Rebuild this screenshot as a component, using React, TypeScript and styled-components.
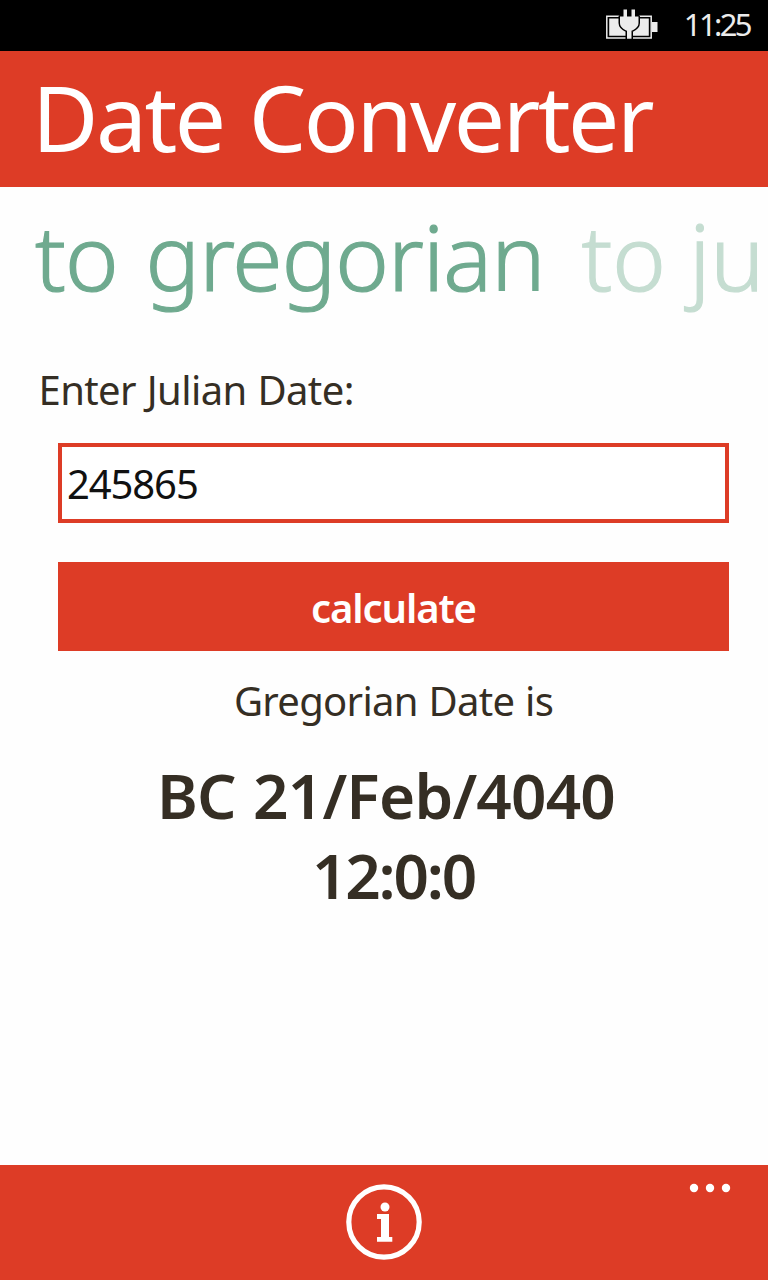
import React from 'react';
import styled, { createGlobalStyle } from 'styled-components';

const accent = '#dd3c26';
const ink = '#352e24';

const GlobalStyle = createGlobalStyle`
  *, *::before, *::after { box-sizing: border-box; }
  body {
    margin: 0;
    background: #fff;
    font-family: 'Noto Sans', 'Open Sans', sans-serif;
  }
`;

const Screen = styled.div`
  width: 768px;
  height: 1280px;
  display: flex;
  flex-direction: column;
  overflow: hidden;
  background: #fefefe;
  color: ${ink};
`;

const StatusBar = styled.div`
  height: 51px;
  display: flex;
  justify-content: flex-end;
  background: #000;
  color: #ececec;
  padding-right: 18px;
`;

const BatteryIcon = styled.svg`
  width: 54px;
  height: 32px;
  margin: 8px 25.5px 0 0;
`;

const Clock = styled.time`
  font-size: 31px;
  line-height: 48px;
  letter-spacing: -2.6px;
`;

const Header = styled.header`
  height: 136px;
  padding: 16px 0 0 32px;
  background: ${accent};
`;

const Title = styled.h1`
  margin: 0;
  color: #fff;
  font-size: 91px;
  font-weight: 400;
  line-height: 100px;
  letter-spacing: -2.5px;
  word-spacing: 4px;
  white-space: nowrap;
`;

const Tabs = styled.nav`
  height: 178px;
  display: flex;
  gap: 37px;
  padding: 19px 0 0 35px;
  overflow: hidden;
`;

const Tab = styled.span<{ $active?: boolean }>`
  flex: none;
  color: ${(p) => (p.$active ? '#6faa8f' : '#c5ddd1')};
  -webkit-text-stroke: 1.2px currentColor;
  font-size: 91px;
  font-weight: 300;
  line-height: 100px;
  letter-spacing: ${(p) => (p.$active ? '-0.9px' : '-0.2px')};
  word-spacing: ${(p) => (p.$active ? '5px' : '0')};
`;

const Content = styled.main`
  flex: 1;
  display: flex;
  flex-direction: column;
  padding: 0 39px 0 58px;
`;

const Label = styled.label`
  margin-left: -19.5px;
  font-size: 40px;
  line-height: 50px;
  letter-spacing: -0.6px;
  word-spacing: 1px;
`;

const DateInput = styled.input`
  height: 80px;
  margin-top: 28px;
  padding: 1px 5px 0;
  border: 4.5px solid ${accent};
  border-radius: 0;
  outline: none;
  background: #fff;
  color: #111;
  font: 400 40px 'Noto Sans', 'Open Sans', sans-serif;
  letter-spacing: -1.1px;
`;

const CalculateButton = styled.button`
  height: 89px;
  margin-top: 39px;
  padding: 2px 0 0;
  border: 0;
  background: ${accent};
  color: #fff;
  font: 600 40px/87px 'Noto Sans', 'Open Sans', sans-serif;
  letter-spacing: -1.1px;
`;

const Caption = styled.p`
  margin: 25px 0 0;
  text-align: center;
  font-size: 40px;
  line-height: 50px;
  letter-spacing: -0.7px;
  word-spacing: 1px;
`;

const Result = styled.output`
  display: flex;
  flex-direction: column;
  margin-top: 29px;
  text-align: center;
  font-size: 62px;
  font-weight: 600;
  line-height: 80px;
`;

const ResultDate = styled.span`
  padding-right: 15px;
  letter-spacing: -0.8px;
  word-spacing: 2px;
`;

const ResultTime = styled.span`
  letter-spacing: -2.2px;
`;

const AppBar = styled.footer`
  height: 115px;
  display: grid;
  grid-template-columns: 1fr auto 1fr;
  padding-top: 18px;
  background: ${accent};
`;

const InfoIcon = styled.svg`
  grid-column: 2;
  width: 76px;
  height: 76px;
  margin-top: 1px;
`;

const MoreIcon = styled.svg`
  justify-self: end;
  width: 42px;
  height: 10px;
  margin-right: 37.5px;
`;

export default function App() {
  return (
    <>
      <GlobalStyle />
      <Screen>
        <StatusBar>
          <BatteryIcon viewBox="0 0 54 32" fill="#ececec">
            <path fill="none" stroke="#ececec" strokeWidth="1.5" d="M2.800 8.200H47.200V30H2.800z" />
            <path d="M5.200 10.500h39.600v17.300H5.200zM48 14h5.500v10H48z" />
            <path
              stroke="#000"
              strokeWidth="3"
              strokeLinejoin="round"
              paintOrder="stroke"
              d="M19.500 1.500H23V8.500h4.500V1.500H31V8.500h3.500v6.500c0 4-3.500 6.300-7 7.800v8h-4.500v-8c-3.500-1.500-7-3.800-7-7.800V8.500h3.500z"
            />
          </BatteryIcon>
          <Clock>11:25</Clock>
        </StatusBar>
        <Header>
          <Title>Date Converter</Title>
        </Header>
        <Tabs>
          <Tab $active>to gregorian</Tab>
          <Tab>to ju</Tab>
        </Tabs>
        <Content>
          <Label htmlFor="julian">Enter Julian Date:</Label>
          <DateInput id="julian" defaultValue="245865" />
          <CalculateButton type="button">calculate</CalculateButton>
          <Caption>Gregorian Date is</Caption>
          <Result>
            <ResultDate>BC 21/Feb/4040</ResultDate>
            <ResultTime>12:0:0</ResultTime>
          </Result>
        </Content>
        <AppBar>
          <InfoIcon viewBox="0 0 76 76" fill="#fff">
            <circle cx="38" cy="38" r="35.200" fill="none" stroke="#fff" strokeWidth="5.200" />
            <circle cx="39" cy="23" r="4.500" />
            <path d="M31 30h12v23h3.300v4.800H31V53h4V35h-4z" />
          </InfoIcon>
          <MoreIcon viewBox="0 0 42 10" fill="#fff">
            <circle cx="5" cy="5" r="4.200" />
            <circle cx="21" cy="5" r="4.200" />
            <circle cx="37" cy="5" r="4.200" />
          </MoreIcon>
        </AppBar>
      </Screen>
    </>
  );
}
